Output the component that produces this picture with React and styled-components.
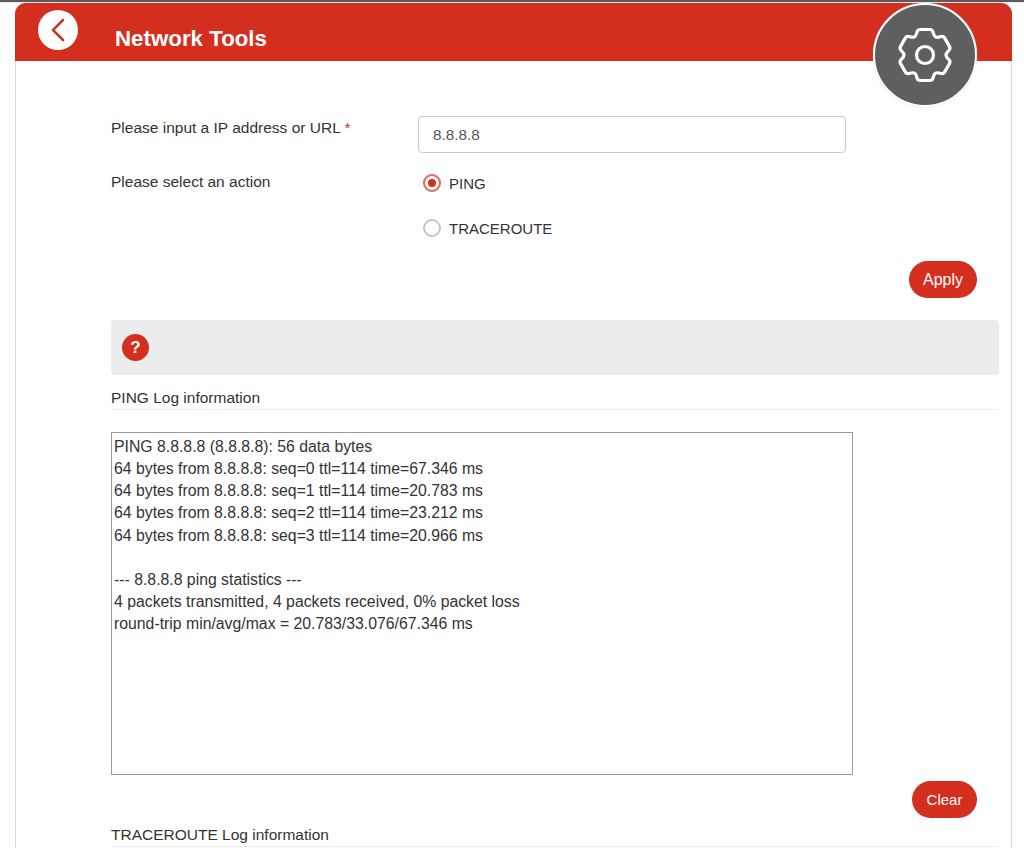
import React from 'react';
import styled, { createGlobalStyle } from 'styled-components';
import { ChevronLeft } from 'lucide-react';

const GlobalStyle = createGlobalStyle`
	html, body {
		margin: 0;
		padding: 0;
		height: 848px;
		overflow: hidden;
		background: #fff;
		color: #333;
		font-family: "Liberation Sans", Arial, sans-serif;
	}
	* {
		box-sizing: border-box;
	}
`;

const TopLine = styled.div`
	height: 3px;
	background: linear-gradient(#5c5c5c 0, #5c5c5c 2px, #e8e8e8 2px);
`;

const Card = styled.div`
	position: relative;
	margin: 0 12px 0 15px;
	height: 845px;
	border-left: 1px solid #dcdcdc;
	border-right: 1px solid #dcdcdc;
	border-radius: 11px 11px 0 0;
`;

const Header = styled.header`
	display: flex;
	align-items: center;
	height: 58px;
	margin: 0 -1px;
	padding-left: 23px;
	background: #d42e1f;
	border-radius: 11px 11px 0 0;
`;

const BackButton = styled.button`
	display: flex;
	align-items: center;
	justify-content: center;
	width: 40px;
	height: 40px;
	margin-top: -5px;
	padding: 0;
	border: 0;
	border-radius: 50%;
	background: #fff;
	color: #c0392b;
`;

const Title = styled.h1`
	margin: 13px 0 0 37px;
	font-size: 22.3px;
	font-weight: 700;
	line-height: 28px;
	color: #fff;
`;

const GearBadge = styled.div`
	position: absolute;
	top: 0;
	left: 857px;
	display: flex;
	align-items: center;
	justify-content: center;
	width: 104px;
	height: 104px;
	border: 2px solid #fff;
	border-radius: 50%;
	background: #5f5f5f;
	box-shadow: 0 0 1px #bbb;
	color: #fff;
`;

const Body = styled.div`
	padding: 55px 12px 0 95px;
`;

const FormRow = styled.div`
	display: flex;
	margin-bottom: ${(p) => p.$gap || 0}px;
`;

const FieldLabel = styled.div`
	width: 307px;
	padding-top: ${(p) => p.$top || 0}px;
	font-size: 15.5px;
	line-height: 20px;
	color: #333;
`;

const Required = styled.span`
	color: #d42e1f;
`;

const TextInput = styled.input`
	width: 428px;
	height: 37px;
	padding: 0 14px;
	border: 1px solid #c9c9c9;
	border-radius: 4px;
	background: #fff;
	font-family: inherit;
	font-size: 15.3px;
	color: #555;
	outline: none;
`;

const RadioGroup = styled.div`
	display: flex;
	flex-direction: column;
	gap: 27px;
	padding: 3px 0 0 5px;
`;

const RadioRow = styled.label`
	display: flex;
	align-items: center;
	gap: 8px;
	height: 18px;
	font-size: 15px;
	color: #333;
`;

const RadioMark = styled.span`
	display: flex;
	align-items: center;
	justify-content: center;
	width: 18px;
	height: 18px;
	border-radius: 50%;
	border: 2px solid ${(p) => (p.$checked ? '#e0655a' : '#c4c4c4')};
	background: #fff;

	&::after {
		content: '';
		display: ${(p) => (p.$checked ? 'block' : 'none')};
		width: 8px;
		height: 8px;
		border-radius: 50%;
		background: #d42e1f;
	}
`;

const ButtonRow = styled.div`
	display: flex;
	justify-content: flex-end;
	padding-right: 22px;
	margin-top: ${(p) => p.$top}px;
`;

const PillButton = styled.button`
	width: ${(p) => p.$width}px;
	height: 37px;
	padding: 0;
	border: 0;
	border-radius: 19px;
	background: #d42e1f;
	font-family: inherit;
	font-size: ${(p) => p.$size}px;
	color: #fff;
`;

const HelpBar = styled.div`
	display: flex;
	align-items: center;
	height: 55px;
	margin-top: 22px;
	padding-left: 11px;
	background: #ececec;
	border-radius: 4px;
`;

const HelpIcon = styled.span`
	display: flex;
	align-items: center;
	justify-content: center;
	width: 27px;
	height: 27px;
	border-radius: 50%;
	background: #d42e1f;
	font-size: 17px;
	font-weight: 700;
	color: #fff;
`;

const SectionTitle = styled.div`
	height: 34px;
	margin-top: ${(p) => p.$top}px;
	padding-top: 12px;
	border-bottom: 1px solid #ececec;
	font-size: 15.5px;
	line-height: 20px;
	color: #333;
`;

const LogBox = styled.div`
	width: 742px;
	height: 343px;
	margin-top: 22px;
	padding: 3px 2px;
	border: 1px solid #9a9a9a;
	font-size: 15.8px;
	line-height: 22.12px;
	color: #333;
	white-space: pre-wrap;
`;

const pingLog = `PING 8.8.8.8 (8.8.8.8): 56 data bytes
64 bytes from 8.8.8.8: seq=0 ttl=114 time=67.346 ms
64 bytes from 8.8.8.8: seq=1 ttl=114 time=20.783 ms
64 bytes from 8.8.8.8: seq=2 ttl=114 time=23.212 ms
64 bytes from 8.8.8.8: seq=3 ttl=114 time=20.966 ms

--- 8.8.8.8 ping statistics ---
4 packets transmitted, 4 packets received, 0% packet loss
round-trip min/avg/max = 20.783/33.076/67.346 ms`;

// six flat-topped teeth, one tooth turned round the centre for each step
const gearPath = () => {
	const turn = (x, y, deg) => {
		const a = (deg * Math.PI) / 180;
		const rx = x * Math.cos(a) - y * Math.sin(a);
		const ry = x * Math.sin(a) + y * Math.cos(a);
		return `${rx.toFixed(2)} ${ry.toFixed(2)}`;
	};
	let d = `M${turn(-5, -25.5, 0)}`;
	for (let k = 0; k < 6; k++) {
		const deg = k * 60;
		d += `L${turn(5, -25.5, deg)}`;
		d += `C${turn(9.5, -25.5, deg)} ${turn(7.04, -20.19, deg)} ${turn(10.5, -18.19, deg)}`;
		d += `C${turn(13.96, -16.19, deg)} ${turn(-9.5, -25.5, deg + 60)} ${turn(-5, -25.5, deg + 60)}`;
	}
	return d + 'Z';
};

const GearIcon = () => (
	<svg width="60" height="60" viewBox="-30 -30 60 60" fill="none" stroke="currentColor" strokeWidth="3.2" strokeLinejoin="round">
		<path d={gearPath()} />
		<circle r="8.5" />
	</svg>
);

const App = () => {
	return (
		<>
			<GlobalStyle />
			<TopLine />
			<Card>
				<Header>
					<BackButton aria-label="Back">
						<ChevronLeft size={40} strokeWidth={1.5} />
					</BackButton>
					<Title>Network Tools</Title>
				</Header>
				<GearBadge>
					<GearIcon />
				</GearBadge>
				<Body>
					<FormRow $gap={18}>
						<FieldLabel $top={2}>
							Please input a IP address or URL <Required>*</Required>
						</FieldLabel>
						<TextInput defaultValue="8.8.8.8" />
					</FormRow>
					<FormRow>
						<FieldLabel $top={1}>Please select an action</FieldLabel>
						<RadioGroup>
							<RadioRow>
								<RadioMark $checked />
								PING
							</RadioRow>
							<RadioRow>
								<RadioMark />
								TRACEROUTE
							</RadioRow>
						</RadioGroup>
					</FormRow>
					<ButtonRow $top={24}>
						<PillButton $width={68} $size={16}>Apply</PillButton>
					</ButtonRow>
					<HelpBar>
						<HelpIcon>?</HelpIcon>
					</HelpBar>
					<SectionTitle $top={1}>PING Log information</SectionTitle>
					<LogBox>{pingLog}</LogBox>
					<ButtonRow $top={6}>
						<PillButton $width={65} $size={15}>Clear</PillButton>
					</ButtonRow>
					<SectionTitle $top={-5}>TRACEROUTE Log information</SectionTitle>
				</Body>
			</Card>
		</>
	);
};

export default App;
